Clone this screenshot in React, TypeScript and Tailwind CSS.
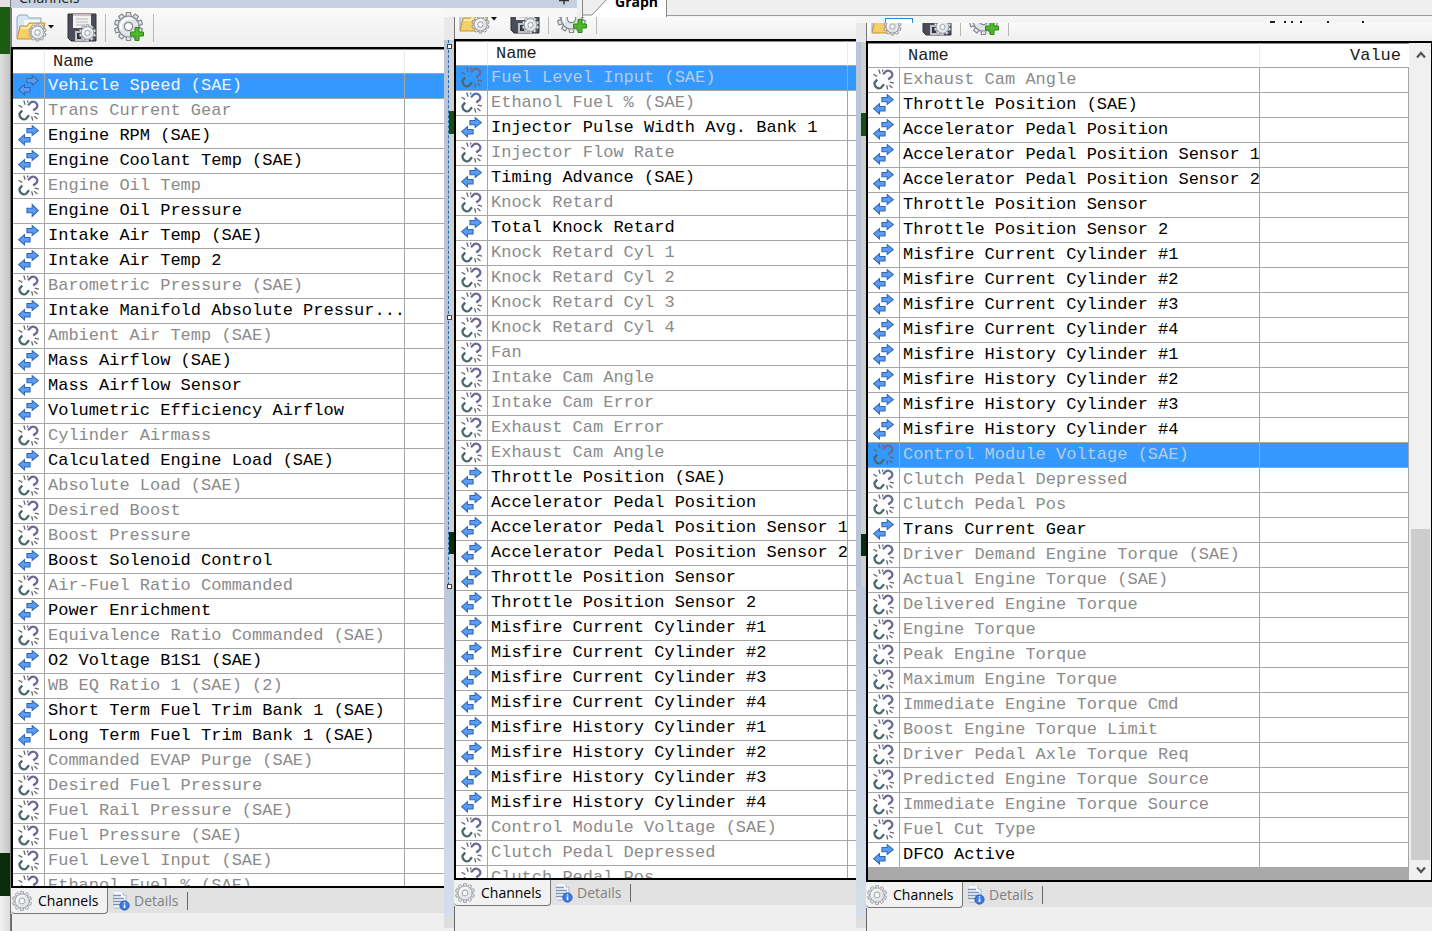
import clsx from "clsx";

type Status = "both" | "send" | "off";

type Channel = {
  name: string;
  status: Status;
};

// "-" marks an unsupported channel, ">" a one way channel
const parse = (list: string): Channel[] =>
  list
    .trim()
    .split("\n")
    .map((line) => {
      const raw = line.trim();
      if (raw.startsWith("-")) return { name: raw.slice(1), status: "off" };
      if (raw.startsWith(">")) return { name: raw.slice(1), status: "send" };
      return { name: raw, status: "both" };
    });

const engineChannels = parse(`
  Vehicle Speed (SAE)
  -Trans Current Gear
  Engine RPM (SAE)
  Engine Coolant Temp (SAE)
  -Engine Oil Temp
  >Engine Oil Pressure
  Intake Air Temp (SAE)
  Intake Air Temp 2
  -Barometric Pressure (SAE)
  Intake Manifold Absolute Pressur...
  -Ambient Air Temp (SAE)
  Mass Airflow (SAE)
  Mass Airflow Sensor
  Volumetric Efficiency Airflow
  -Cylinder Airmass
  Calculated Engine Load (SAE)
  -Absolute Load (SAE)
  -Desired Boost
  -Boost Pressure
  Boost Solenoid Control
  -Air-Fuel Ratio Commanded
  Power Enrichment
  -Equivalence Ratio Commanded (SAE)
  O2 Voltage B1S1 (SAE)
  -WB EQ Ratio 1 (SAE) (2)
  Short Term Fuel Trim Bank 1 (SAE)
  Long Term Fuel Trim Bank 1 (SAE)
  -Commanded EVAP Purge (SAE)
  -Desired Fuel Pressure
  -Fuel Rail Pressure (SAE)
  -Fuel Pressure (SAE)
  -Fuel Level Input (SAE)
  -Ethanol Fuel % (SAE)
`);

const fuelChannels = parse(`
  -Fuel Level Input (SAE)
  -Ethanol Fuel % (SAE)
  Injector Pulse Width Avg. Bank 1
  -Injector Flow Rate
  Timing Advance (SAE)
  -Knock Retard
  Total Knock Retard
  -Knock Retard Cyl 1
  -Knock Retard Cyl 2
  -Knock Retard Cyl 3
  -Knock Retard Cyl 4
  -Fan
  -Intake Cam Angle
  -Intake Cam Error
  -Exhaust Cam Error
  -Exhaust Cam Angle
  Throttle Position (SAE)
  Accelerator Pedal Position
  Accelerator Pedal Position Sensor 1
  Accelerator Pedal Position Sensor 2
  Throttle Position Sensor
  Throttle Position Sensor 2
  Misfire Current Cylinder #1
  Misfire Current Cylinder #2
  Misfire Current Cylinder #3
  Misfire Current Cylinder #4
  Misfire History Cylinder #1
  Misfire History Cylinder #2
  Misfire History Cylinder #3
  Misfire History Cylinder #4
  -Control Module Voltage (SAE)
  -Clutch Pedal Depressed
  -Clutch Pedal Pos
`);

const torqueChannels = parse(`
  -Exhaust Cam Angle
  Throttle Position (SAE)
  Accelerator Pedal Position
  Accelerator Pedal Position Sensor 1
  Accelerator Pedal Position Sensor 2
  Throttle Position Sensor
  Throttle Position Sensor 2
  Misfire Current Cylinder #1
  Misfire Current Cylinder #2
  Misfire Current Cylinder #3
  Misfire Current Cylinder #4
  Misfire History Cylinder #1
  Misfire History Cylinder #2
  Misfire History Cylinder #3
  Misfire History Cylinder #4
  -Control Module Voltage (SAE)
  -Clutch Pedal Depressed
  -Clutch Pedal Pos
  Trans Current Gear
  -Driver Demand Engine Torque (SAE)
  -Actual Engine Torque (SAE)
  -Delivered Engine Torque
  -Engine Torque
  -Peak Engine Torque
  -Maximum Engine Torque
  -Immediate Engine Torque Cmd
  -Boost Engine Torque Limit
  -Driver Pedal Axle Torque Req
  -Predicted Engine Torque Source
  -Immediate Engine Torque Source
  -Fuel Cut Type
  DFCO Active
`);

const StatusIcon = ({ status }: { status: Status }) => {
  if (status === "off") {
    return (
      <svg viewBox="0 0 20 20" className="mx-auto mb-px block size-[21px]" fill="none">
        <path d="M9.500 5 L12.500 2 Q15 .8 17.300 2.800 Q19.300 5 17.800 7.300 L14.500 10" stroke="#6b6a96" strokeWidth="2.200" />
        <path d="M4 10 L1.500 13 Q1 15 3 17.300 Q5.500 19.300 7.500 18 L10.500 14.500" stroke="#4b686c" strokeWidth="2.200" />
        <path
          d="M.5 5 L4 7 M5.500 .5 L6.800 4.500 M9.500 .5 L9 2.500 M13 15.500 L14 19.500 M16 12.500 L20 13.500 M15.500 15.500 L18.500 18"
          stroke="#66666c"
          strokeWidth="1.200"
        />
      </svg>
    );
  }
  if (status === "send") {
    return (
      <svg viewBox="0 0 20 20" className="mx-auto mb-px block size-[21px]">
        <path d="M8.500 7.800 H13.500 V4.300 L19.400 10 L13.500 15.700 V12.200 H8.500 Z" fill="#5b9bf5" stroke="#2f69b0" />
      </svg>
    );
  }
  return (
    <svg viewBox="0 0 20 20" className="mx-auto mb-px block size-[21px]">
      <path d="M8.500 3.300 H13.500 V.600 L19.400 5.300 L13.500 10 V7.300 H8.500 Z" fill="#5b9bf5" stroke="#2f69b0" />
      <path d="M11.500 11.900 H6.200 V9.200 L.600 14 L6.200 19 V16.200 H11.500 Z" fill="#5b9bf5" stroke="#2f69b0" />
    </svg>
  );
};

const teeth = [0, 36, 72, 108, 144, 180, 216, 252, 288, 324];

// Drawn around 0,0 with an outer radius of 14
const Gear = () => (
  <g stroke="#858a90" strokeWidth="1.200">
    {teeth.map((angle) => (
      <path key={angle} d="M-2.800 -9 L-2 -14 H2 L2.800 -9" fill="#e4e6e9" transform={`rotate(${angle})`} />
    ))}
    <circle r="10.500" fill="#e1e4e8" />
    <circle r="8.500" fill="#e1e4e8" stroke="none" />
    <path d="M-7 3 A8 8 0 0 1 4 -7" stroke="#ffffff" fill="none" strokeWidth="2" />
    <circle r="4.200" fill="#fafafa" />
  </g>
);

const FolderIcon = () => (
  <svg viewBox="0 0 31 30" className="h-[30px] w-[31px]">
    <path d="M1 26 V5 L3 3 H11 L13 6 H25 V26 Z" fill="#d7e7f5" stroke="#8fa6bc" />
    <path d="M8 8 H24 V14 H8 Z" fill="#f5faff" />
    <path d="M1 27 L4 14 H11 L13 11 H29 L26 27 Z" fill="#f7cf68" stroke="#c09436" />
    <path d="M5 16 H12 L14 13 H27" stroke="#fdeaae" fill="none" strokeWidth="2" />
    <g transform="translate(21.500 20.500) scale(.62)">
      <Gear />
    </g>
  </svg>
);

const SaveIcon = () => (
  <svg viewBox="0 0 30 30" className="size-[30px]">
    <path d="M1 2 H29 V29 H4 L1 26 Z" fill="#4b4d57" stroke="#30313a" />
    <path d="M6 2 H24 V16 H6 Z" fill="#f4f0f1" />
    <path d="M6 2 H24 V4 H6 Z" fill="#d9b9c0" />
    <path d="M9 7 H21 M9 10 H21 M9 13 H18" stroke="#b6b6ba" />
    <path d="M8 19 H22 V29 H8 Z" fill="#c3c5cc" />
    <path d="M10 21 H14 V27 H10 Z" fill="#34353e" />
    <g transform="translate(20.500 21) scale(.6)">
      <Gear />
    </g>
  </svg>
);

const AddGearIcon = () => (
  <svg viewBox="0 0 31 30" className="h-[30px] w-[31px]">
    <g transform="translate(14.500 14.500)">
      <Gear />
    </g>
    <path
      d="M21 15.500 H25 V20 H29.500 V24 H25 V28.500 H21 V24 H16.500 V20 H21 Z"
      fill="#4fb92c"
      stroke="#2c8716"
    />
  </svg>
);

const Toolbar = ({ styles }: { styles: string }) => (
  <div
    className={clsx(
      "flex shrink-0 items-end overflow-hidden bg-linear-to-b from-[#fafafa] to-[#efefef] pb-[5px] pl-1",
      styles
    )}
  >
    <button aria-label="Open channel config" className="flex items-center">
      <FolderIcon />
      <svg viewBox="0 0 8 4" className="h-1 w-2">
        <path d="M1 0 H7 L4 3.500 Z" fill="#111111" />
      </svg>
    </button>
    <button aria-label="Save channel config" className="ml-3">
      <SaveIcon />
    </button>
    <span className="mr-2 ml-2 h-7 w-px bg-[#b8b8b8]" />
    <button aria-label="Add channel">
      <AddGearIcon />
    </button>
    <span className="ml-2 h-7 w-px bg-[#b8b8b8]" />
  </div>
);

type TableProps = {
  channels: Channel[];
  selected: number;
  valueLabel?: string;
};

const ChannelTable = ({ channels, selected, valueLabel }: TableProps) => (
  <table className="w-full table-fixed border-separate border-spacing-0 bg-white font-['Liberation_Mono',monospace] text-[17px] leading-6">
    <colgroup>
      <col className="w-8" />
      <col className="w-[360px]" />
      <col />
    </colgroup>
    <thead className="leading-[23px]">
      <tr className="h-[25px] text-[#1c1c1c]">
        <th className="border-t border-r border-b border-t-[#8c8c8c] border-r-[#ebebeb] border-b-[#a6a6a6] p-0" />
        <th className="border-t border-r border-b border-t-[#8c8c8c] border-r-[#ebebeb] border-b-[#a6a6a6] p-0 pl-2 text-left font-normal">
          Name
        </th>
        <th className="border-t border-b border-t-[#8c8c8c] border-b-[#a6a6a6] p-0 pr-2 text-right font-normal">
          {valueLabel}
        </th>
      </tr>
    </thead>
    <tbody>
      {channels.map(({ name, status }, index) => (
        <tr
          key={name}
          className={clsx(
            "h-[25px]",
            index === selected && "bg-[#3399ff]",
            index === selected && (status === "off" ? "text-[#b5cbe3]" : "text-[#eef6ff]"),
            index !== selected && (status === "off" ? "text-[#8b8b8b]" : "text-black")
          )}
        >
          <td className="border-r border-b border-[#a6a6a6] p-0">
            <StatusIcon status={status} />
          </td>
          <td className="overflow-hidden border-r border-b border-[#a6a6a6] p-0 pl-[3px] whitespace-pre">{name}</td>
          <td className={clsx("border-b border-[#a6a6a6] p-0", valueLabel && "border-r")} />
        </tr>
      ))}
    </tbody>
  </table>
);

const Scrollbar = () => (
  <div className="flex w-[23px] shrink-0 flex-col border-r border-black bg-[#f0f0f0] pr-px pl-0.5">
    <button aria-label="Scroll up" className="flex h-[23px] items-center justify-center">
      <svg viewBox="0 0 10 8" className="h-2 w-2.5">
        <path d="M1 6.500 L5 2 L9 6.500" fill="none" stroke="#555555" strokeWidth="2.200" />
      </svg>
    </button>
    <div className="flex-[462]" />
    <div className="flex-[331] bg-[#cdcdcd]" />
    <button aria-label="Scroll down" className="flex h-5 items-center justify-center">
      <svg viewBox="0 0 10 8" className="h-2 w-2.5">
        <path d="M1 1.500 L5 6 L9 1.500" fill="none" stroke="#555555" strokeWidth="2.200" />
      </svg>
    </button>
  </div>
);

const PanelTabs = () => (
  <div className="flex h-[26px] shrink-0 bg-linear-to-b from-[#e2e2e2] from-96% to-[#efefef] to-96% text-[14px] leading-6">
    <button className="flex w-[97px] items-center rounded-b-[4px] border-r border-b border-[#777777] bg-[#f2f2f2] text-black">
      <svg viewBox="0 0 20 20" className="mr-1.5 ml-px size-5">
        <g transform="translate(10 10) scale(.68)" opacity=".85">
          <Gear />
        </g>
      </svg>
      Channels
    </button>
    <button className="flex items-center pl-1 text-[#808080]">
      <svg viewBox="0 0 18 20" className="mr-1 h-5 w-[18px]">
        <path d="M2 1 H11 L14 4 V17 H2 Z" fill="#f7faff" />
        <path d="M11 1 V4 H14 V17 M2 17 H9" stroke="#a9b4c4" fill="none" />
        <path d="M1 4.500 H9 M1 7.500 H12 M1 10.500 H12 M1 13.500 H8" stroke="#7f93b8" strokeWidth="1.300" />
        <circle cx="12.500" cy="14.500" r="4.600" fill="#3c7be0" stroke="#2358b5" />
        <path d="M12.500 13.500 V17 M12.500 11.200 V12.500" stroke="#ffffff" strokeWidth="1.600" />
      </svg>
      Details
    </button>
    <span className="mt-1 ml-2 h-[18px] w-px bg-[#666666]" />
  </div>
);

type PanelProps = TableProps & {
  toolbar: string;
  footer: string;
};

const Panel = ({ toolbar, footer, ...table }: PanelProps) => (
  <div className="flex min-h-0 grow flex-col">
    <div className="flex shrink-0 border-l border-[#777777]">
      <Toolbar styles={clsx("grow", toolbar)} />
    </div>
    <div className="flex min-h-0 flex-1 overflow-hidden border-y-2 border-l-2 border-black bg-[#a9a9a9]">
      <div className="min-w-0 grow">
        <ChannelTable {...table} />
      </div>
      {table.valueLabel && <Scrollbar />}
    </div>
    <PanelTabs />
    <div className={clsx("shrink-0 border-l border-[#666666] bg-[#efefef]", footer)} />
  </div>
);

// Window edge that shows between two panels
const Divider = ({ dashed = false }: { dashed?: boolean }) => (
  <div className="relative flex w-2.5 shrink-0 flex-col">
    <div className={clsx("bg-[#e9e9e9]", dashed ? "h-[23px]" : "h-[19px]")} />
    <div className="flex h-[545px] bg-[#b9c5d7]">
      <div className={clsx("w-[5px]", dashed && "border-r border-dashed border-[#1b6cb5]")} />
      <div className="flex grow flex-col bg-[#cfcfcf]">
        <div className="h-[71px]" />
        <div className="h-[23px] bg-[#14500e]" />
        <div className="grow" />
        <div className="h-[22px] bg-[#0a2d0a]" />
        <div className="h-[31px]" />
      </div>
    </div>
    <div className="grow bg-linear-to-b from-[#bcc8da] to-[#d5deea]" />
    <div className="mb-[3px] h-[11px] bg-[#dedede]" />
    {dashed && (
      <>
        <span className="absolute top-[27px] left-[3px] size-[5px] border border-[#444444] bg-white" />
        <span className="absolute top-[298px] left-[3px] size-[5px] border border-[#444444] bg-white" />
        <span className="absolute top-[567px] left-[3px] size-[5px] border border-[#444444] bg-white" />
      </>
    )}
  </div>
);

const DocumentTabs = () => (
  <div className="flex h-[17px] shrink-0 overflow-hidden">
    <div className="flex w-[133px] shrink-0 flex-col bg-[#f7f7f7]">
      <div className="flex h-2 justify-end bg-[#c6d2e0] pr-2">
        <svg viewBox="0 0 10 8" className="h-2 w-2.5">
          <path d="M0 .5 H10 M5 0 V4.500" stroke="#333333" strokeWidth="1.400" />
        </svg>
      </div>
    </div>
    <div className="w-1.5 shrink-0 border-r border-[#888888] bg-[#f0f0f0]" />
    <button className="flex shrink-0 items-end bg-white text-[14px] leading-5 font-bold text-black">
      <svg viewBox="0 0 32 17" className="h-[17px] w-8">
        <path d="M0 0 H23 L9 15 H0 Z" fill="#efefef" />
        <path d="M0 15 H9 L23 0" fill="none" stroke="#888888" />
      </svg>
      <span className="pr-2 pb-[5px]">Graph</span>
    </button>
    <div className="grow border-l border-[#888888] bg-[#f5f5f5]">
      <div className="h-4 border-b border-[#999999] bg-[#efefef]" />
    </div>
  </div>
);

export default function App() {
  return (
    <div className="flex h-screen overflow-hidden bg-[#efefef] font-['Open_Sans',sans-serif]">
      <div className="flex w-[11px] shrink-0 flex-col border-r border-[#777777]">
        <div className="h-[7px] bg-[#e3e3e3]" />
        <div className="h-[47px] bg-[#1a5c12]" />
        <div className="grow bg-linear-to-r from-[#e0e0e0] to-[#c4c4c4]" />
        <div className="h-[43px] bg-[#0b2c0b]" />
        <div className="h-[35px] bg-linear-to-r from-[#f2f2f2] to-[#dcdcdc]" />
      </div>

      <div className="flex w-[433px] shrink-0 flex-col">
        <div className="flex h-2 shrink-0 items-end overflow-hidden bg-[#c6d2e0] pl-2 text-[14px] leading-5 text-[#222222]">
          Channels
        </div>
        <Panel channels={engineChannels} selected={0} toolbar="h-[39px]" footer="h-[17px]" />
      </div>

      <div className="flex min-w-0 grow flex-col">
        <DocumentTabs />
        <div className="flex min-h-0 grow">
          <Divider dashed />
          <div className="flex w-[402px] shrink-0 flex-col">
            <Panel channels={fuelChannels} selected={0} toolbar="h-[22px]" footer="h-[25px]" />
          </div>
          <div className="flex min-w-0 grow flex-col">
            <div className="flex h-1.5 shrink-0 items-end justify-between bg-[#f5f5f5] pr-[61px] pl-[29px]">
              <span className="h-[5px] w-7 border-x border-t border-[#2a86d8] bg-white" />
              <svg viewBox="0 0 102 2" className="h-0.5 w-[102px]">
                <path d="M1 1 H6 M15 1 H17 M22 1 H24 M31 1 H33 M58 1 H60 M93 1 H95" stroke="#222222" strokeWidth="2" />
              </svg>
            </div>
            <div className="flex min-h-0 grow">
              <Divider />
              <Panel
                channels={torqueChannels}
                selected={15}
                valueLabel="Value"
                toolbar="h-[18px]"
                footer="h-[23px]"
              />
            </div>
          </div>
        </div>
      </div>
    </div>
  );
}
